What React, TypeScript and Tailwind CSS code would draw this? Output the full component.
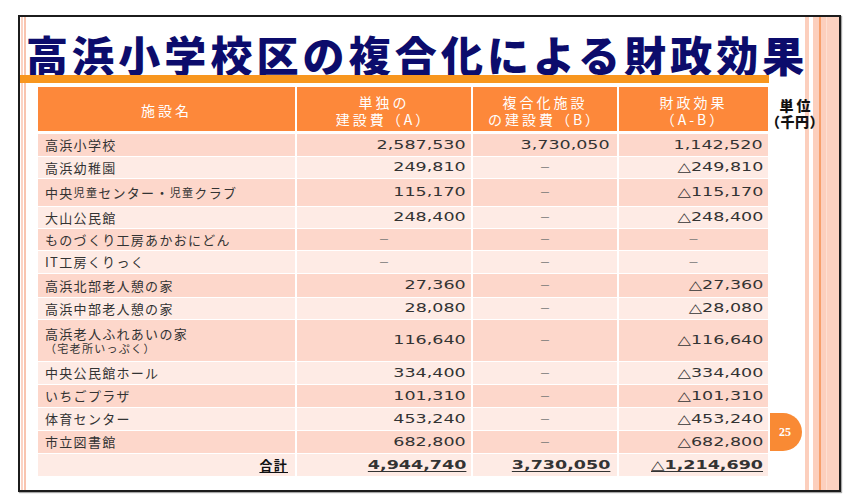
import React from "react";

type Row = {
  name: React.ReactNode;
  a: string;
  b: string;
  c: string;
  h: string;
  dark: boolean;
  total?: boolean;
};

const DARK = "bg-[#fdd7cb]";
const LIGHT = "bg-[#feebe5]";

const sm = (t: string) => <span className="text-[11px]">{t}</span>;

const rows: Row[] = [
  { name: "高浜小学校", a: "2,587,530", b: "3,730,050", c: "1,142,520", h: "h-[22px]", dark: true },
  { name: "高浜幼稚園", a: "249,810", b: "-", c: "△249,810", h: "h-[21px]", dark: false },
  {
    name: (
      <>
        中央{sm("児童")}センター・{sm("児童")}クラブ
      </>
    ),
    a: "115,170",
    b: "-",
    c: "△115,170",
    h: "h-[27px]",
    dark: true,
  },
  { name: "大山公民館", a: "248,400", b: "-", c: "△248,400", h: "h-[21px]", dark: false },
  { name: "ものづくり工房あかおにどん", a: "-", b: "-", c: "-", h: "h-[21px]", dark: true },
  { name: "IT工房くりっく", a: "-", b: "-", c: "-", h: "h-[22px]", dark: false },
  { name: "高浜北部老人憩の家", a: "27,360", b: "-", c: "△27,360", h: "h-[23px]", dark: true },
  { name: "高浜中部老人憩の家", a: "28,080", b: "-", c: "△28,080", h: "h-[21px]", dark: false },
  {
    name: (
      <span className="flex flex-col leading-[15px]">
        <span>高浜老人ふれあいの家</span>
        <span className="text-[11px]">（宅老所いっぷく）</span>
      </span>
    ),
    a: "116,640",
    b: "-",
    c: "△116,640",
    h: "h-[41px]",
    dark: true,
  },
  { name: "中央公民館ホール", a: "334,400", b: "-", c: "△334,400", h: "h-[22px]", dark: false },
  { name: "いちごプラザ", a: "101,310", b: "-", c: "△101,310", h: "h-[22px]", dark: true },
  { name: "体育センター", a: "453,240", b: "-", c: "△453,240", h: "h-[22px]", dark: false },
  { name: "市立図書館", a: "682,800", b: "-", c: "△682,800", h: "h-[22px]", dark: true },
  { name: "合計", a: "4,944,740", b: "3,730,050", c: "△1,214,690", h: "h-[22px]", dark: false, total: true },
];

const NUM =
  "inline-block origin-right scale-x-[1.4] font-['DejaVu_Sans',sans-serif] text-[12.5px] text-[#333333]";
const JP = "font-['Noto_Sans_CJK_JP',sans-serif]";

function NumCell({ v, bg, pr, total }: { v: string; bg: string; pr: string; total?: boolean }) {
  if (v === "-") {
    return (
      <div className={`${bg} flex items-center justify-center`}>
        <span className={`${JP} text-[11px] text-[#777777]`}>－</span>
      </div>
    );
  }
  return (
    <div className={`${bg} flex items-center justify-end ${pr}`}>
      <span className={`${NUM} ${total ? "font-bold underline underline-offset-2 text-[#111111]" : ""}`}>{v}</span>
    </div>
  );
}

export default function App() {
  return (
    <div className={`w-[856px] h-[504px] bg-white overflow-hidden ${JP}`}>
      <div className="ml-[18px] mt-[15px] w-[823px] h-[477px] border-2 border-[#1c1c1c] flex shadow-[1px_1px_1px_rgba(0,0,0,0.35)]">
        {/* left stripes */}
        <div className="flex w-[8px] shrink-0">
          <div className="w-[1px] bg-white" />
          <div className="w-[2px] bg-[#fbd3c4]" />
          <div className="w-[1px] bg-white" />
          <div className="w-[2px] bg-[#f9c4af]" />
          <div className="w-[2px] bg-white" />
        </div>

        {/* main */}
        <div className="relative z-10 flex flex-col w-[777px] shrink-0">
          <div className="h-[58px] flex items-end">
            <h1 className="-ml-[2px] text-[42px] leading-none font-black tracking-[4.1px] text-[#0c0c6c] whitespace-nowrap">
              高浜小学校区の複合化による財政効果
            </h1>
          </div>
          <div className="-ml-[8px] w-[749px] h-[8px] bg-[#f8961f]" />

          <div className="mt-[4px] flex">
            <div className="ml-[10px] w-[730px] flex flex-col gap-y-[1px]">
              {/* header */}
              <div className="grid grid-cols-[257px_174px_144px_149px] gap-x-[2px] h-[44px] mb-[2px] text-white text-[14px] tracking-[3px] leading-[17px] text-center">
                <div className="bg-[#fd883a] flex items-center justify-center pt-[3px]">施設名</div>
                <div className="bg-[#fd883a] flex flex-col items-center justify-center pt-[4px]">
                  <span>単独の</span>
                  <span>建設費（A）</span>
                </div>
                <div className="bg-[#fd883a] flex flex-col items-center justify-center pt-[4px]">
                  <span>複合化施設</span>
                  <span>の建設費（B）</span>
                </div>
                <div className="bg-[#fd883a] flex flex-col items-center justify-center pt-[4px]">
                  <span>財政効果</span>
                  <span>（A-B）</span>
                </div>
              </div>

              {rows.map((r, i) => {
                const bg = r.dark ? DARK : LIGHT;
                return (
                  <div key={i} className={`grid grid-cols-[257px_174px_144px_149px] gap-x-[2px] ${r.h}`}>
                    <div
                      className={`${bg} flex items-center text-[13px] tracking-[1.3px] text-[#333333] ${
                        r.total ? "justify-end pr-[7px]" : "pl-[7px]"
                      }`}
                    >
                      {r.total ? (
                        <span className="font-bold underline underline-offset-2 text-[#111111]">{r.name}</span>
                      ) : (
                        r.name
                      )}
                    </div>
                    <NumCell v={r.a} bg={bg} pr="pr-[5px]" total={r.total} />
                    <NumCell v={r.b} bg={bg} pr="pr-[7px]" total={r.total} />
                    <NumCell v={r.c} bg={bg} pr="pr-[5px]" total={r.total} />
                  </div>
                );
              })}
            </div>

            {/* side column */}
            <div className="w-[37px] flex flex-col">
              <div className="mt-[10px] -ml-[3px] w-[60px] flex flex-col items-center text-[14px] font-black leading-[16px] text-[#111111] whitespace-nowrap">
                <span className="tracking-[3px] pl-[3px]">単位</span>
                <span className="tracking-[0.5px]">（千円）</span>
              </div>
              <div className="mt-auto mb-[25px] ml-[2px] w-[32px] h-[38px] rounded-r-[19px] bg-[#f98a34] flex items-center justify-center">
                <span className="font-['Liberation_Serif',serif] font-bold text-[12px] text-white -ml-[2px]">25</span>
              </div>
            </div>
          </div>
        </div>

        {/* right stripes */}
        <div className="flex flex-1">
          <div className="w-[4px] bg-[#fccfbd]" />
          <div className="w-[4px] bg-white" />
          <div className="w-[6px] bg-[#fccfbd]" />
          <div className="w-[2px] bg-[#f7a06c]" />
          <div className="w-[5px] bg-[#fccfbd]" />
          <div className="w-[1px] bg-[#fde0d3]" />
          <div className="flex-1 bg-[#fcd2c1]" />
        </div>
      </div>
    </div>
  );
}
